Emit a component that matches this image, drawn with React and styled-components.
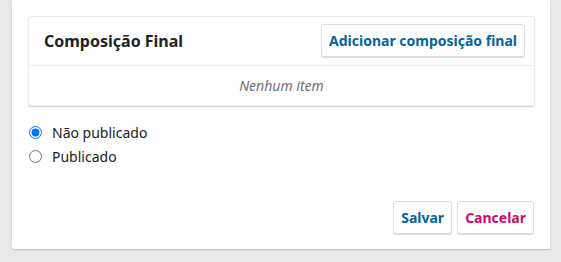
import React, { useState } from "react";
import styled, { createGlobalStyle } from "styled-components";

const GlobalStyle = createGlobalStyle`
  html, body {
    margin: 0;
    padding: 0;
    background: #e7e9eb;
    font-family: "Noto Sans", "Liberation Sans", sans-serif;
    color: #222;
  }
`;

const Page = styled.div`
  display: flex;
  padding: 0 11px 13px 12px;
`;

const Panel = styled.div`
  flex: 1;
  background: #fff;
  padding: 16px 15px 15px 16px;
  box-shadow: 0 1px 2px rgba(0, 0, 0, 0.2);
  border-radius: 0 0 2px 2px;
`;

const Card = styled.div`
  border: 1px solid #ececec;
  border-radius: 2px;
  box-shadow: 0 1px 1px rgba(0, 0, 0, 0.18);
`;

const CardHeader = styled.div`
  display: flex;
  align-items: center;
  justify-content: space-between;
  padding: 7px 9px 8px 15px;
  border-bottom: 1px solid #eee;
`;

const Title = styled.h2`
  margin: 0;
  font-size: 16px;
  font-weight: 700;
  color: #222;
`;

const Button = styled.button`
  height: 33px;
  padding: 0 7px;
  background: #fff;
  border: 1px solid #ddd;
  border-radius: 3px;
  box-shadow: 0 1px 0 #ddd;
  font-family: inherit;
  font-size: 14px;
  font-weight: 700;
  color: ${(p) => (p.$danger ? "#d00a6c" : "#006798")};
  cursor: pointer;
`;

const Empty = styled.div`
  height: 39px;
  display: flex;
  align-items: center;
  justify-content: center;
  font-size: 14px;
  font-style: italic;
  color: #707070;
`;

const Options = styled.div`
  display: flex;
  flex-direction: column;
  padding-top: 14px;
`;

const Option = styled.label`
  display: flex;
  align-items: center;
  height: 24px;
  font-size: 14px;
  color: #222;
  cursor: pointer;
`;

const Radio = styled.input`
  width: 13px;
  height: 13px;
  margin: 0 10px 0 1px;
`;

const Actions = styled.div`
  display: flex;
  justify-content: flex-end;
  gap: 5px;
  padding: 33px 1px 0 0;
`;

export default function App() {
  const [status, setStatus] = useState("unpublished");

  return (
    <Page>
      <GlobalStyle />
      <Panel>
        <Card>
          <CardHeader>
            <Title>Composição Final</Title>
            <Button>Adicionar composição final</Button>
          </CardHeader>
          <Empty>Nenhum item</Empty>
        </Card>

        <Options>
          <Option>
            <Radio
              type="radio"
              name="status"
              checked={status === "unpublished"}
              onChange={() => setStatus("unpublished")}
            />
            Não publicado
          </Option>
          <Option>
            <Radio
              type="radio"
              name="status"
              checked={status === "published"}
              onChange={() => setStatus("published")}
            />
            Publicado
          </Option>
        </Options>

        <Actions>
          <Button>Salvar</Button>
          <Button $danger>Cancelar</Button>
        </Actions>
      </Panel>
    </Page>
  );
}
